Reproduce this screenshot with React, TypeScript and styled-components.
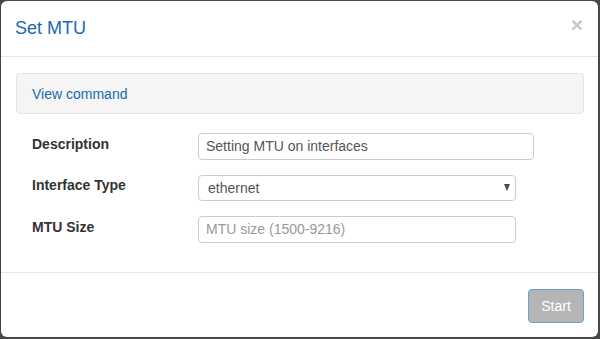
import React, { useState } from "react";
import styled, { createGlobalStyle } from "styled-components";

const GlobalStyle = createGlobalStyle`
  html, body {
    margin: 0;
    padding: 0;
    background: #474747;
    font-family: "Liberation Sans", Arial, sans-serif;
  }
  * {
    box-sizing: border-box;
  }
`;

const Screen = styled.div`
  width: 600px;
  height: 339px;
  padding: 1px 0 0 1px;
  background: #474747;
`;

const Modal = styled.div`
  width: 597px;
  height: 336px;
  background: #fff;
  border-radius: 6px;
  display: flex;
  flex-direction: column;
  overflow: hidden;
`;

const Header = styled.div`
  height: 56px;
  flex-shrink: 0;
  display: flex;
  align-items: center;
  justify-content: space-between;
  padding: 0 15px 0 14px;
  border-bottom: 1px solid #e5e5e5;
`;

const Title = styled.h4`
  margin: 0;
  font-size: 18px;
  font-weight: normal;
  color: #2068b4;
`;

const Close = styled.button`
  border: none;
  background: none;
  padding: 0;
  margin-top: -8px;
  font-family: "Liberation Sans", Arial, sans-serif;
  font-size: 21px;
  font-weight: bold;
  line-height: 1;
  color: #c8c8c8;
  cursor: pointer;
`;

const Body = styled.div`
  flex: 1;
  padding: 16px 14px 0 15px;
  border-bottom: 1px solid #e5e5e5;
`;

const CommandPanel = styled.div`
  height: 41px;
  background: #f5f5f5;
  border: 1px solid #e3e3e3;
  border-radius: 4px;
  display: flex;
  align-items: center;
  padding-left: 15px;
`;

const CommandLink = styled.a`
  font-size: 14px;
  color: #2068b4;
  text-decoration: none;
  cursor: pointer;
`;

const Form = styled.form`
  display: flex;
  flex-direction: column;
  gap: 15px;
  padding: 19px 0 0 16px;
`;

const Row = styled.div`
  display: grid;
  grid-template-columns: 166px auto;
  align-items: center;
`;

const Label = styled.label`
  font-size: 14px;
  font-weight: bold;
  color: #333;
  margin-top: -5px;
`;

const Input = styled.input<{ $width: number }>`
  width: ${(p) => p.$width}px;
  height: 26.5px;
  padding: 0 7px;
  border: 1px solid #ccc;
  border-radius: 4px;
  font-family: "Liberation Sans", Arial, sans-serif;
  font-size: 14px;
  color: #555;
  &::placeholder {
    color: #999;
  }
  &:focus {
    outline: none;
  }
`;

const SelectWrap = styled.div`
  position: relative;
  width: 318px;
`;

const Select = styled.select`
  width: 100%;
  height: 26.5px;
  padding: 0 9px;
  border: 1px solid #ccc;
  border-radius: 4px;
  background: #fff;
  appearance: none;
  font-family: "Liberation Sans", Arial, sans-serif;
  font-size: 14px;
  color: #555;
  &:focus {
    outline: none;
  }
`;

const Arrow = styled.span`
  position: absolute;
  right: 6px;
  top: 9px;
  width: 0;
  height: 0;
  border-left: 3.5px solid transparent;
  border-right: 3.5px solid transparent;
  border-top: 7px solid #4a4a4a;
  pointer-events: none;
`;

const Footer = styled.div`
  height: 64px;
  flex-shrink: 0;
  display: flex;
  justify-content: flex-end;
  padding: 16px 14px 0 0;
`;

const StartButton = styled.button`
  width: 56px;
  height: 34px;
  background: #b5b5b5;
  border: 1px solid #6a9fd4;
  border-radius: 4px;
  color: #fff;
  font-family: "Liberation Sans", Arial, sans-serif;
  font-size: 14px;
  cursor: not-allowed;
`;

const App: React.FC = () => {
  const [description, setDescription] = useState<string>("Setting MTU on interfaces");
  const [type, setType] = useState<string>("ethernet");
  const [mtu, setMtu] = useState<string>("");

  return (
    <Screen>
      <GlobalStyle />
      <Modal>
        <Header>
          <Title>Set MTU</Title>
          <Close type="button">×</Close>
        </Header>
        <Body>
          <CommandPanel>
            <CommandLink>View command</CommandLink>
          </CommandPanel>
          <Form onSubmit={(e) => e.preventDefault()}>
            <Row>
              <Label>Description</Label>
              <Input
                $width={336}
                value={description}
                onChange={(e) => setDescription(e.target.value)}
              />
            </Row>
            <Row>
              <Label>Interface Type</Label>
              <SelectWrap>
                <Select value={type} onChange={(e) => setType(e.target.value)}>
                  <option value="ethernet">ethernet</option>
                  <option value="port-channel">port-channel</option>
                </Select>
                <Arrow />
              </SelectWrap>
            </Row>
            <Row>
              <Label>MTU Size</Label>
              <Input
                $width={318}
                placeholder="MTU size (1500-9216)"
                value={mtu}
                onChange={(e) => setMtu(e.target.value)}
              />
            </Row>
          </Form>
        </Body>
        <Footer>
          <StartButton type="button">Start</StartButton>
        </Footer>
      </Modal>
    </Screen>
  );
};

export default App;
